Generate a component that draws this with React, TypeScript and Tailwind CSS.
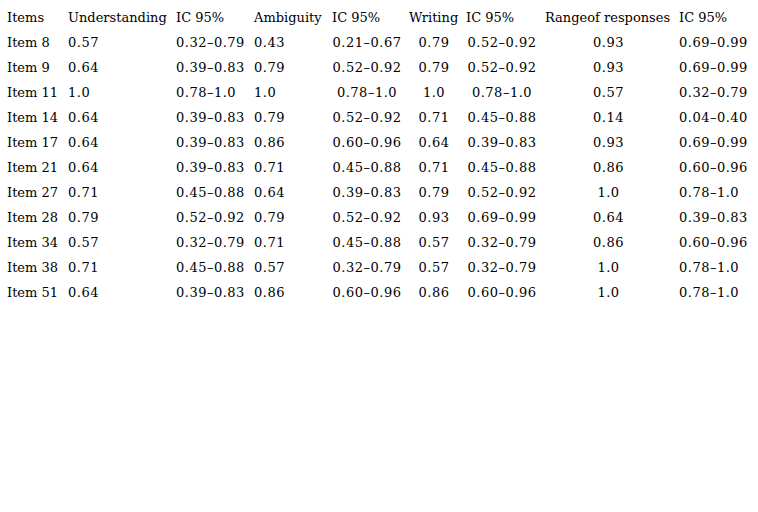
const HEAD = [
  "Items",
  "Understanding",
  "IC 95%",
  "Ambiguity",
  "IC 95%",
  "Writing",
  "IC 95%",
  "Rangeof responses",
  "IC 95%",
];

const ROWS = [
  ["Item 8", "0.57", "0.32–0.79", "0.43", "0.21–0.67", "0.79", "0.52–0.92", "0.93", "0.69–0.99"],
  ["Item 9", "0.64", "0.39–0.83", "0.79", "0.52–0.92", "0.79", "0.52–0.92", "0.93", "0.69–0.99"],
  ["Item 11", "1.0", "0.78–1.0", "1.0", "0.78–1.0", "1.0", "0.78–1.0", "0.57", "0.32–0.79"],
  ["Item 14", "0.64", "0.39–0.83", "0.79", "0.52–0.92", "0.71", "0.45–0.88", "0.14", "0.04–0.40"],
  ["Item 17", "0.64", "0.39–0.83", "0.86", "0.60–0.96", "0.64", "0.39–0.83", "0.93", "0.69–0.99"],
  ["Item 21", "0.64", "0.39–0.83", "0.71", "0.45–0.88", "0.71", "0.45–0.88", "0.86", "0.60–0.96"],
  ["Item 27", "0.71", "0.45–0.88", "0.64", "0.39–0.83", "0.79", "0.52–0.92", "1.0", "0.78–1.0"],
  ["Item 28", "0.79", "0.52–0.92", "0.79", "0.52–0.92", "0.93", "0.69–0.99", "0.64", "0.39–0.83"],
  ["Item 34", "0.57", "0.32–0.79", "0.71", "0.45–0.88", "0.57", "0.32–0.79", "0.86", "0.60–0.96"],
  ["Item 38", "0.71", "0.45–0.88", "0.57", "0.32–0.79", "0.57", "0.32–0.79", "1.0", "0.78–1.0"],
  ["Item 51", "0.64", "0.39–0.83", "0.86", "0.60–0.96", "0.86", "0.60–0.96", "1.0", "0.78–1.0"],
];

// column widths (px) and which data columns are centred
const COLS = [
  { w: "w-[61px]", center: false },
  { w: "w-[108px]", center: false },
  { w: "w-[78px]", center: false },
  { w: "w-[78px]", center: false },
  { w: "w-[77px]", center: true },
  { w: "w-[57px]", center: true },
  { w: "w-[79px]", center: true },
  { w: "w-[134px]", center: true },
  { w: "w-[75px]", center: false },
];

export default function App() {
  return (
    <div className="w-[758px] h-[512px] bg-white text-black font-['DejaVu_Serif',serif] text-[13px]">
      <table className="table-fixed border-collapse ml-[7px] mt-[5px]">
        <colgroup>
          {COLS.map((c, i) => (
            <col key={i} className={c.w} />
          ))}
        </colgroup>
        <thead>
          <tr className="h-[25px]">
            {HEAD.map((h, i) => (
              <th key={i} className="p-0 pr-[7px] font-normal text-left whitespace-nowrap">
                {h}
              </th>
            ))}
          </tr>
        </thead>
        <tbody>
          {ROWS.map((row) => (
            <tr key={row[0]} className="h-[25px]">
              {row.map((v, i) => (
                <td
                  key={i}
                  className={`p-0 pr-[7px] whitespace-nowrap ${i > 0 ? "tracking-[0.5px]" : ""} ${COLS[i].center ? "text-center" : "text-left"}`}
                >
                  {v}
                </td>
              ))}
            </tr>
          ))}
        </tbody>
      </table>
    </div>
  );
}
